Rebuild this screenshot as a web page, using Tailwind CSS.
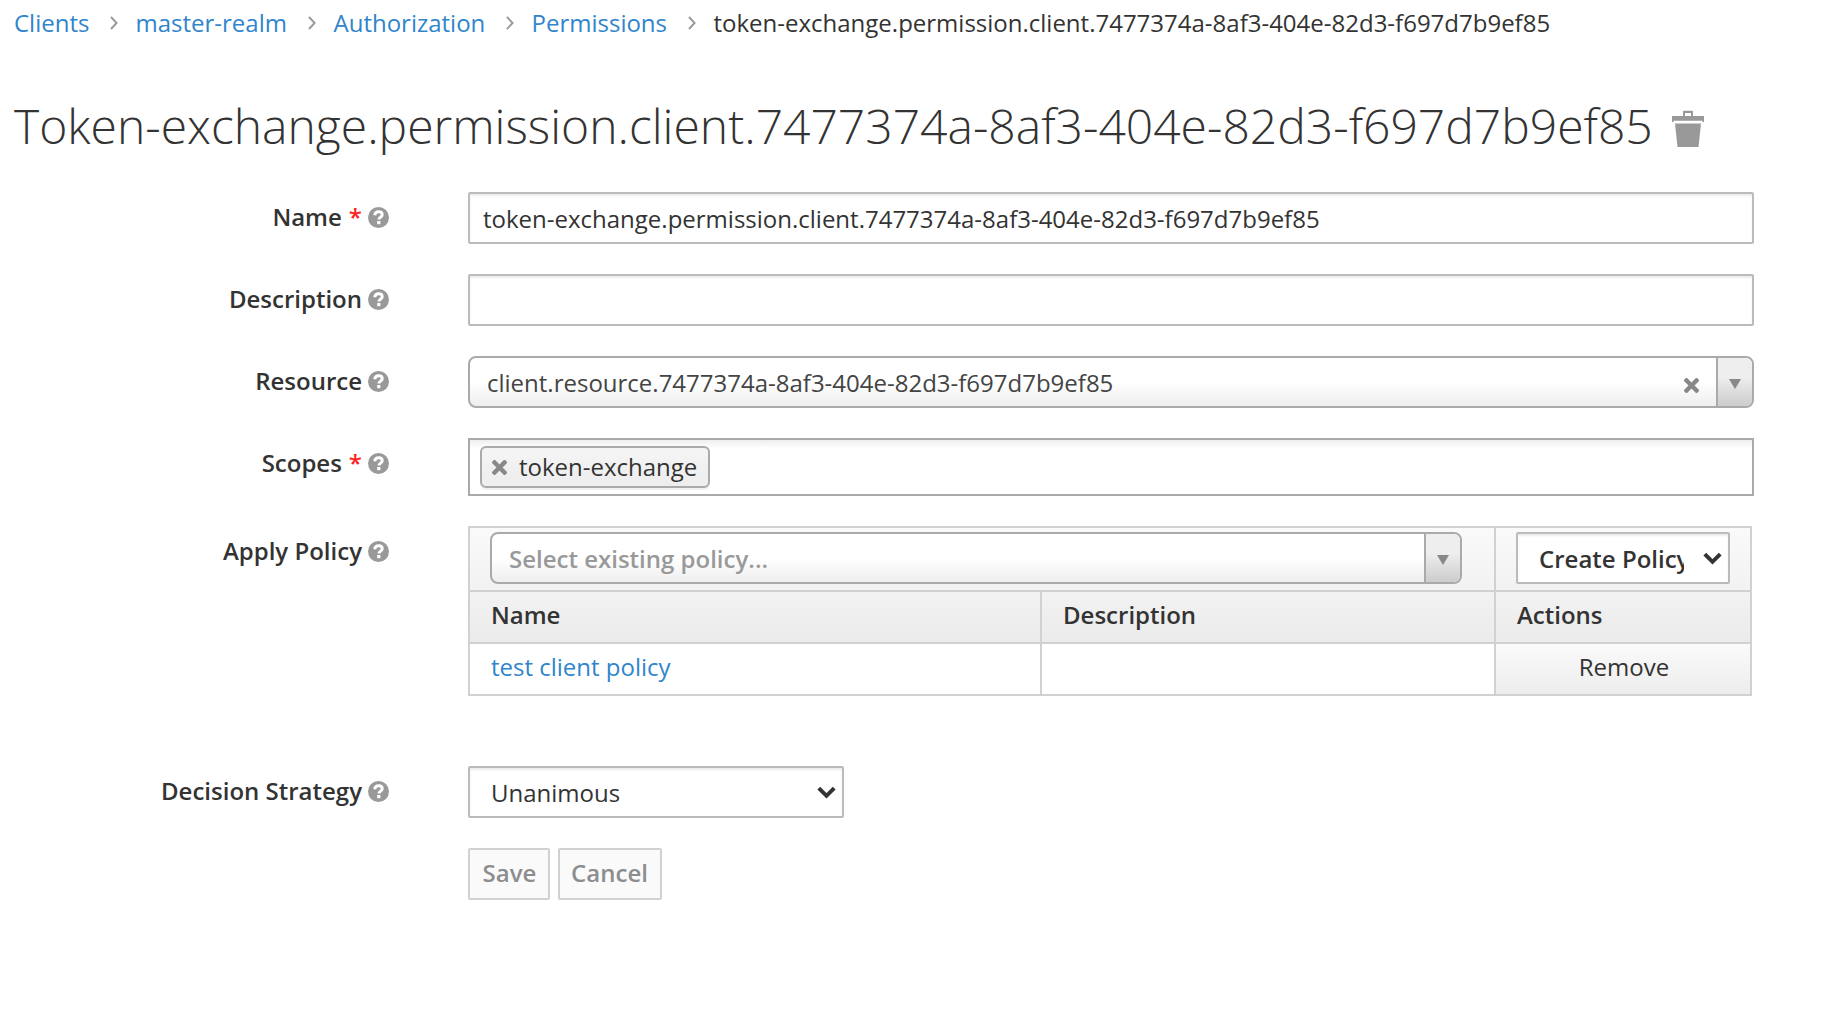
<!DOCTYPE html>
<html lang="en">
<head>
<meta charset="utf-8">
<title>Permission</title>
<script src="https://cdn.jsdelivr.net/npm/@tailwindcss/browser@4"></script>
</head>
<body class="bg-white font-['Open_Sans',sans-serif] text-[24px] leading-[40px] text-[#333]">
<svg class="hidden">
  <symbol id="help" viewBox="0 0 21 21"><circle cx="10.5" cy="10.5" r="10.5" fill="#999"/><path d="M6.700 8.200C7 5.700 8.600 4.800 10.600 4.800c2 0 3.600 1 3.600 2.900 0 2.400-3.200 2.400-3.300 4.800" fill="none" stroke="#fff" stroke-width="3"/><rect x="9.200" y="14" width="3.200" height="3.200" fill="#fff"/></symbol>
  <symbol id="angle" viewBox="0 0 8 14"><path d="M1 1l5.6 6L1 13" fill="none" stroke="#999" stroke-width="1.9"/></symbol>
  <symbol id="cross" viewBox="0 0 15 15"><path d="M2.500 2.500l10 10M12.500 2.500L2.500 12.500" fill="none" stroke="#888" stroke-width="4.400" stroke-linecap="square"/></symbol>
  <symbol id="tri" viewBox="0 0 12 10"><path d="M0 0h12L6 10z" fill="#888"/></symbol>
  <symbol id="chev" viewBox="0 0 19 13"><path d="M1.8 2.200l7.700 7.600 7.700-7.600" fill="none" stroke="#333" stroke-width="4"/></symbol>
</svg>
<nav class="flex h-[46px] items-center pl-[14px] whitespace-nowrap text-[#3085cc]">
  <a class="flex w-[121.500px] items-center justify-between">Clients<svg class="mr-[18px] h-[14px] w-2"><use href="#angle"/></svg></a>
  <a class="flex w-[198px] items-center justify-between">master-realm<svg class="mr-[18px] h-[14px] w-2"><use href="#angle"/></svg></a>
  <a class="flex w-[198px] items-center justify-between">Authorization<svg class="mr-[18px] h-[14px] w-2"><use href="#angle"/></svg></a>
  <a class="flex w-[182px] items-center justify-between">Permissions<svg class="mr-[18px] h-[14px] w-2"><use href="#angle"/></svg></a>
  <span class="text-[#333]">token-exchange.permission.client.7477374a-8af3-404e-82d3-f697d7b9ef85</span>
</nav>
<h1 class="flex h-[146px] items-start pl-[14px] pt-[53px] text-[48px] leading-[53px] font-light whitespace-nowrap">Token-exchange.permission.client.7477374a-8af3-404e-82d3-f697d7b9ef85
  <svg class="ml-[19px] mt-[11px] h-[38px] w-8 shrink-0" viewBox="0 0 32 38"><path d="M0 6h11V1.500q0-.8.8-.8h8.400q.8 0 .8.8V6h11v6h-1.500v-1.300H1.500V12H0zM13 6h6V3h-6z" fill="#999" fill-rule="evenodd"/><path d="M3 13.500h26L26.500 37h-21z" fill="#999"/></svg>
</h1>
<form class="flex flex-col gap-[30px]">
  <div class="flex items-start gap-[79px]">
    <label class="flex w-[389px] items-center justify-end pt-[5px] font-semibold">Name<span class="ml-[7px] text-[#f22]">*</span><svg class="ml-[6px] h-[21px] w-[21px]"><use href="#help"/></svg></label>
    <input class="h-[52px] w-[1286px] rounded-[2px] border-2 border-[#bbb] px-[13px] shadow-[inset_0_2px_2px_rgba(3,3,3,0.075)]" value="token-exchange.permission.client.7477374a-8af3-404e-82d3-f697d7b9ef85">
  </div>
  <div class="flex items-start gap-[79px]">
    <label class="flex w-[389px] items-center justify-end pt-[5px] font-semibold">Description<svg class="ml-[6px] h-[21px] w-[21px]"><use href="#help"/></svg></label>
    <input class="h-[52px] w-[1286px] rounded-[2px] border-2 border-[#bbb] px-[13px] shadow-[inset_0_2px_2px_rgba(3,3,3,0.075)]">
  </div>
  <div class="flex items-start gap-[79px]">
    <label class="flex w-[389px] items-center justify-end pt-[5px] font-semibold">Resource<svg class="ml-[6px] h-[21px] w-[21px]"><use href="#help"/></svg></label>
    <div class="flex h-[52px] w-[1286px] items-center overflow-hidden rounded-[8px] border-2 border-[#aaa] bg-linear-to-t from-[#eee] to-white to-50% pl-[17px] text-[#444]">
      <span class="grow pt-[2px]">client.resource.7477374a-8af3-404e-82d3-f697d7b9ef85</span>
      <svg class="mr-[17px] mt-[6px] h-[15px] w-[15px]"><use href="#cross"/></svg>
      <span class="flex h-full w-[36px] items-center justify-center border-l-2 border-[#aaa] bg-linear-to-t from-[#ccc] to-[#eee] to-60%"><svg class="mt-[3px] h-[10px] w-3"><use href="#tri"/></svg></span>
    </div>
  </div>
  <div class="flex items-start gap-[79px]">
    <label class="flex w-[389px] items-center justify-end pt-[5px] font-semibold">Scopes<span class="ml-[7px] text-[#f22]">*</span><svg class="ml-[6px] h-[21px] w-[21px]"><use href="#help"/></svg></label>
    <div class="h-[58px] w-[1286px] border-2 border-[#aaa] bg-linear-to-b from-[#eee] to-white to-15% px-[10px] pt-[6px]">
      <span class="flex h-[42px] w-[230px] items-center rounded-[6px] border-2 border-[#aaa] bg-linear-to-b from-[#f4f4f4] from-20% via-[#f0f0f0] via-50% to-[#eee] pl-[10px] shadow-[0_2px_0_rgba(0,0,0,0.05)]"><svg class="mr-[12px] h-[15px] w-[15px]"><use href="#cross"/></svg>token-exchange</span>
    </div>
  </div>
  <div class="flex items-start gap-[79px]">
    <label class="flex w-[389px] items-center justify-end pt-[5px] font-semibold">Apply Policy<svg class="ml-[6px] h-[21px] w-[21px]"><use href="#help"/></svg></label>
    <div class="w-[1284px] border-2 border-[#d1d1d1] font-semibold">
      <div class="flex h-[64px] border-b-2 border-[#d1d1d1] bg-linear-to-b from-[#fafafa] to-[#f2f2f2]">
        <div class="w-[1026px] border-r-2 border-[#d1d1d1] pl-[20px] pt-1">
          <div class="flex h-[52px] w-[972px] items-center overflow-hidden rounded-[8px] border-2 border-[#aaa] bg-linear-to-t from-[#eee] to-white to-50% pl-[17px] text-[#999]">
            <span class="grow pt-[2px]">Select existing policy...</span>
            <span class="flex h-full w-[36px] items-center justify-center border-l-2 border-[#aaa] bg-linear-to-t from-[#ccc] to-[#eee] to-60%"><svg class="mt-[3px] h-[10px] w-3"><use href="#tri"/></svg></span>
          </div>
        </div>
        <div class="pl-[20px] pt-1">
          <div class="flex h-[52px] w-[214px] items-center rounded-[2px] border-2 border-[#bbb] bg-white pl-[21px] shadow-[inset_0_2px_2px_rgba(3,3,3,0.075)]"><span class="w-[145px] overflow-hidden pt-[2px] whitespace-nowrap">Create Policy...</span><svg class="ml-[19px] h-[13px] w-[19px] shrink-0"><use href="#chev"/></svg></div>
        </div>
      </div>
      <div class="flex h-[52px] border-b-2 border-[#d1d1d1] bg-linear-to-b from-[#f2f2f2] to-[#ebebeb] leading-[46px]">
        <div class="w-[572px] border-r-2 border-[#d1d1d1] pl-[21px]">Name</div>
        <div class="w-[454px] border-r-2 border-[#d1d1d1] pl-[21px]">Description</div>
        <div class="pl-[21px]">Actions</div>
      </div>
      <div class="flex h-[50px] font-normal leading-[46px]">
        <a class="w-[572px] border-r-2 border-[#d1d1d1] pl-[21px] text-[#3085cc]">test client policy</a>
        <div class="w-[454px] border-r-2 border-[#d1d1d1]"></div>
        <div class="grow bg-linear-to-b from-[#fafafa] to-[#ededed] pl-[2px] text-center">Remove</div>
      </div>
    </div>
  </div>
  <div class="mt-[40px] flex items-start gap-[79px]">
    <label class="flex w-[389px] items-center justify-end pt-[5px] font-semibold">Decision Strategy<svg class="ml-[6px] h-[21px] w-[21px]"><use href="#help"/></svg></label>
    <div class="flex h-[52px] w-[376px] items-center justify-between rounded-[2px] border-2 border-[#bbb] pl-[21px] pr-[6px] shadow-[inset_0_2px_2px_rgba(3,3,3,0.075)]"><span class="pt-[2px]">Unanimous</span><svg class="h-[13px] w-[19px]"><use href="#chev"/></svg></div>
  </div>
  <div class="flex gap-2 pl-[468px] font-semibold text-[#8b8d8f]">
    <button type="button" class="h-[52px] w-[82px] rounded-[2px] border-2 border-[#d1d1d1] bg-[#fafafa] pb-[3px] pl-px">Save</button>
    <button type="button" class="h-[52px] w-[104px] rounded-[2px] border-2 border-[#d1d1d1] bg-[#fafafa] pr-px pb-[3px]">Cancel</button>
  </div>
</form>
</body>
</html>
